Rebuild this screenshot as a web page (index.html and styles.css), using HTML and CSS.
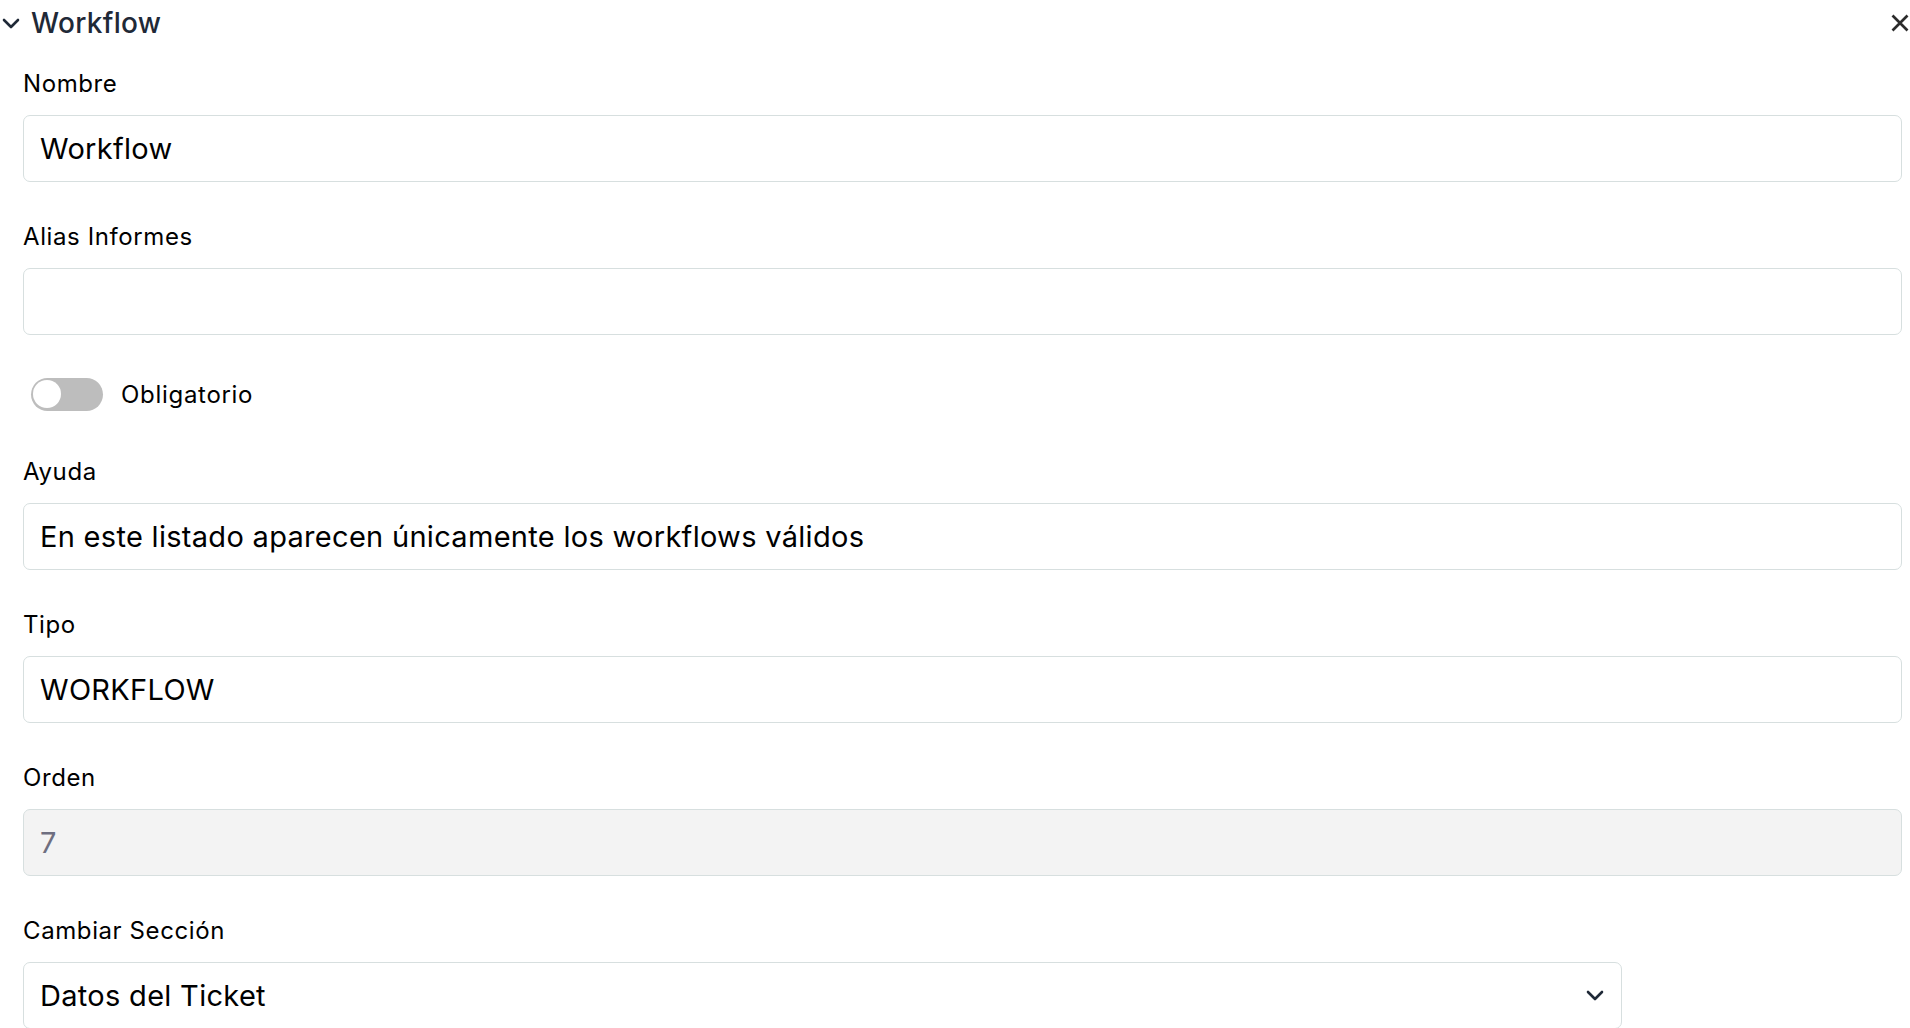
FILE: index.html
```html
<!DOCTYPE html>
<html lang="es">
<head>
    <meta charset="utf-8">
    <title>Workflow</title>
    <link rel="stylesheet" href="styles.css">
</head>
<body>

<div class="panel">
    <div class="panel-header">
        <button class="collapse-btn" type="button">
            <svg width="18" height="11" viewBox="0 0 18 11"><path d="M2 2l7 7 7-7" fill="none" stroke="#1f2937" stroke-width="2.6" stroke-linecap="round" stroke-linejoin="round"/></svg>
            <span class="panel-title">Workflow</span>
        </button>
        <button class="close-btn" type="button" aria-label="Cerrar">
            <svg width="18" height="18" viewBox="0 0 18 18"><path d="M1.5 1.5l15 15M16.5 1.5l-15 15" fill="none" stroke="#2b2b2b" stroke-width="2.7"/></svg>
        </button>
    </div>

    <form class="panel-body">
        <div class="field">
            <label for="nombre">Nombre</label>
            <input id="nombre" class="text-input" type="text" value="Workflow">
        </div>

        <div class="field">
            <label for="alias">Alias Informes</label>
            <input id="alias" class="text-input" type="text" value="">
        </div>

        <div class="switch-row">
            <span class="switch"></span>
            <span class="switch-label">Obligatorio</span>
        </div>

        <div class="field">
            <label for="ayuda">Ayuda</label>
            <input id="ayuda" class="text-input" type="text" value="En este listado aparecen únicamente los workflows válidos">
        </div>

        <div class="field">
            <label for="tipo">Tipo</label>
            <input id="tipo" class="text-input" type="text" value="WORKFLOW">
        </div>

        <div class="field">
            <label for="orden">Orden</label>
            <input id="orden" class="text-input" type="text" value="7" disabled>
        </div>

        <div class="field">
            <label for="seccion">Cambiar Sección</label>
            <div class="select-wrap">
                <select id="seccion" class="text-input select-input">
                    <option>Datos del Ticket</option>
                </select>
                <svg class="select-arrow" width="18" height="11" viewBox="0 0 18 11"><path d="M2 2l7 7 7-7" fill="none" stroke="#1f2937" stroke-width="2.6" stroke-linecap="round" stroke-linejoin="round"/></svg>
            </div>
        </div>
    </form>
</div>

</body>
</html>
```

FILE: styles.css
```css
body { margin: 0; background: #fff; font-family: 'Inter', 'Noto Sans', sans-serif; color: #000; }

.panel {
    width: 100%;
}
.panel-header {
    display: flex;
    align-items: center;
    justify-content: space-between;
    height: 40px;
    padding-top: 3px;
}
.collapse-btn {
    display: flex;
    align-items: center;
    gap: 11px;
    padding: 0 0 0 2px;
    border: none;
    background: none;
    font: inherit;
    cursor: pointer;
}
.panel-title {
    font-size: 28px;
    font-weight: 500;
    letter-spacing: 0.3px;
    color: #1f2937;
    line-height: 40px;
}
.close-btn {
    display: flex;
    padding: 0 1px 0 0;
    border: none;
    background: none;
    cursor: pointer;
}

.panel-body {
    padding: 23px 8px 0 23px;
}
.field {
    margin-bottom: 37px;
}
.field label {
    display: block;
    font-size: 24px;
    letter-spacing: 0.6px;
    line-height: 36px;
    margin-bottom: 13px;
}
.text-input {
    display: block;
    box-sizing: border-box;
    width: 100%;
    height: 67px;
    padding: 0 16px;
    border: 1px solid #d7dfdf;
    border-radius: 7px;
    background: #fff;
    font-family: inherit;
    font-size: 29px;
    letter-spacing: 0.3px;
    color: #000;
    outline: none;
}
.text-input:disabled {
    background: #f3f3f3;
    color: #6e6e80;
}

.select-wrap {
    position: relative;
    width: 1599px;
}
.select-input {
    -webkit-appearance: none;
    appearance: none;
    cursor: pointer;
}
.select-arrow {
    position: absolute;
    right: 18px;
    top: 28px;
    pointer-events: none;
}

.switch-row {
    display: flex;
    align-items: center;
    gap: 18px;
    padding: 6px 0 0 8px;
    margin-bottom: 43px;
}
.switch {
    position: relative;
    width: 72px;
    height: 33px;
    border-radius: 17px;
    background: #bdbdbd;
}
.switch::after {
    content: "";
    position: absolute;
    left: 2px;
    top: 2px;
    width: 28px;
    height: 28px;
    border-radius: 50%;
    background: #fff;
}
.switch-label {
    font-size: 24px;
    letter-spacing: 0.7px;
    line-height: 33px;
}
```
